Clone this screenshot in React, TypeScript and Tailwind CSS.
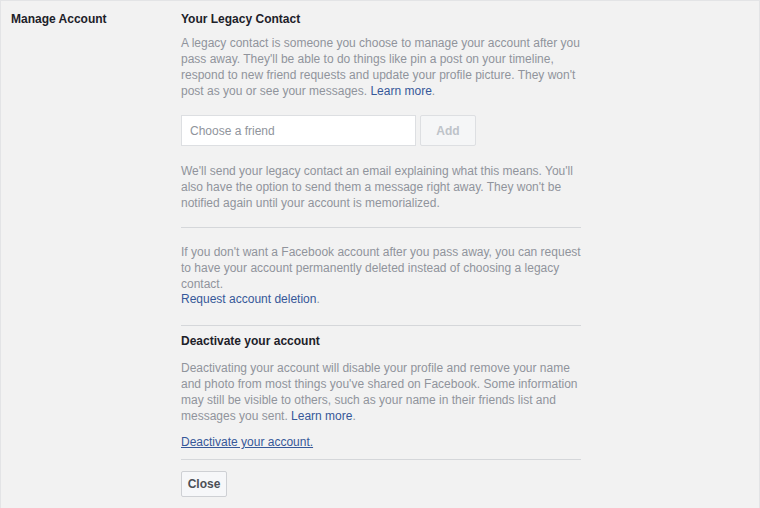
export default function App() {
  const link = "text-[#365899]";
  return (
    <div className="h-[508px] w-[760px] overflow-hidden border-l border-r border-t border-[#e3e4e6] bg-[#f2f2f2] font-['Liberation_Sans',Arial,sans-serif] text-[12px] leading-[16px]">
      <div className="flex pt-[10px]">
        <div className="w-[180px] shrink-0 pl-[10px] font-bold text-[#1d2129]">Manage Account</div>
        <div className="w-[400px]">
          <h3 className="font-bold text-[#1d2129]">Your Legacy Contact</h3>
          <p className="mt-[8px] text-[#90949c]">
            A legacy contact is someone you choose to manage your account after you pass away. They'll be able to do things like pin a post on your timeline, respond to new friend requests and update your profile picture. They won't post as you or see your messages. <a className={link}>Learn more</a>.
          </p>

          <div className="mt-[16px] flex gap-[4px]">
            <input
              className="h-[31px] w-[235px] border border-[#dddfe2] bg-white px-[8px] text-[12px] text-[#1d2129] outline-none placeholder:text-[#90949c]"
              placeholder="Choose a friend"
            />
            <button className="h-[31px] w-[56px] rounded-[2px] border border-[#dddfe2] bg-[#f5f6f7] font-bold text-[#bec3c9]">
              Add
            </button>
          </div>

          <p className="mt-[17px] text-[#90949c]">
            We'll send your legacy contact an email explaining what this means. You'll also have the option to send them a message right away. They won't be notified again until your account is memorialized.
          </p>

          <div className="mt-[16px] border-t border-[#d5d7da]" />

          <p className="mt-[16px] text-[#90949c]">
            If you don't want a Facebook account after you pass away, you can request to have your account permanently deleted instead of choosing a legacy contact.
          </p>
          <div className="leading-[14px]">
            <a className={link}>Request account deletion</a>
            <span className="text-[#90949c]">.</span>
          </div>

          <div className="mt-[19px] border-t border-[#d5d7da]" />

          <h3 className="mt-[7px] font-bold text-[#1d2129]">Deactivate your account</h3>
          <p className="mt-[11px] text-[#90949c]">
            Deactivating your account will disable your profile and remove your name and photo from most things you've shared on Facebook. Some information may still be visible to others, such as your name in their friends list and messages you sent. <a className={link}>Learn more</a>.
          </p>
          <div className="mt-[10px]">
            <a className={`${link} underline`}>Deactivate your account.</a>
          </div>

          <div className="mt-[9px] border-t border-[#d5d7da]" />

          <button className="mt-[11px] h-[26px] w-[46px] rounded-[2px] border border-[#ced0d4] bg-[#f6f7f9] font-bold text-[#4b4f56]">
            Close
          </button>
        </div>
      </div>
    </div>
  );
}
